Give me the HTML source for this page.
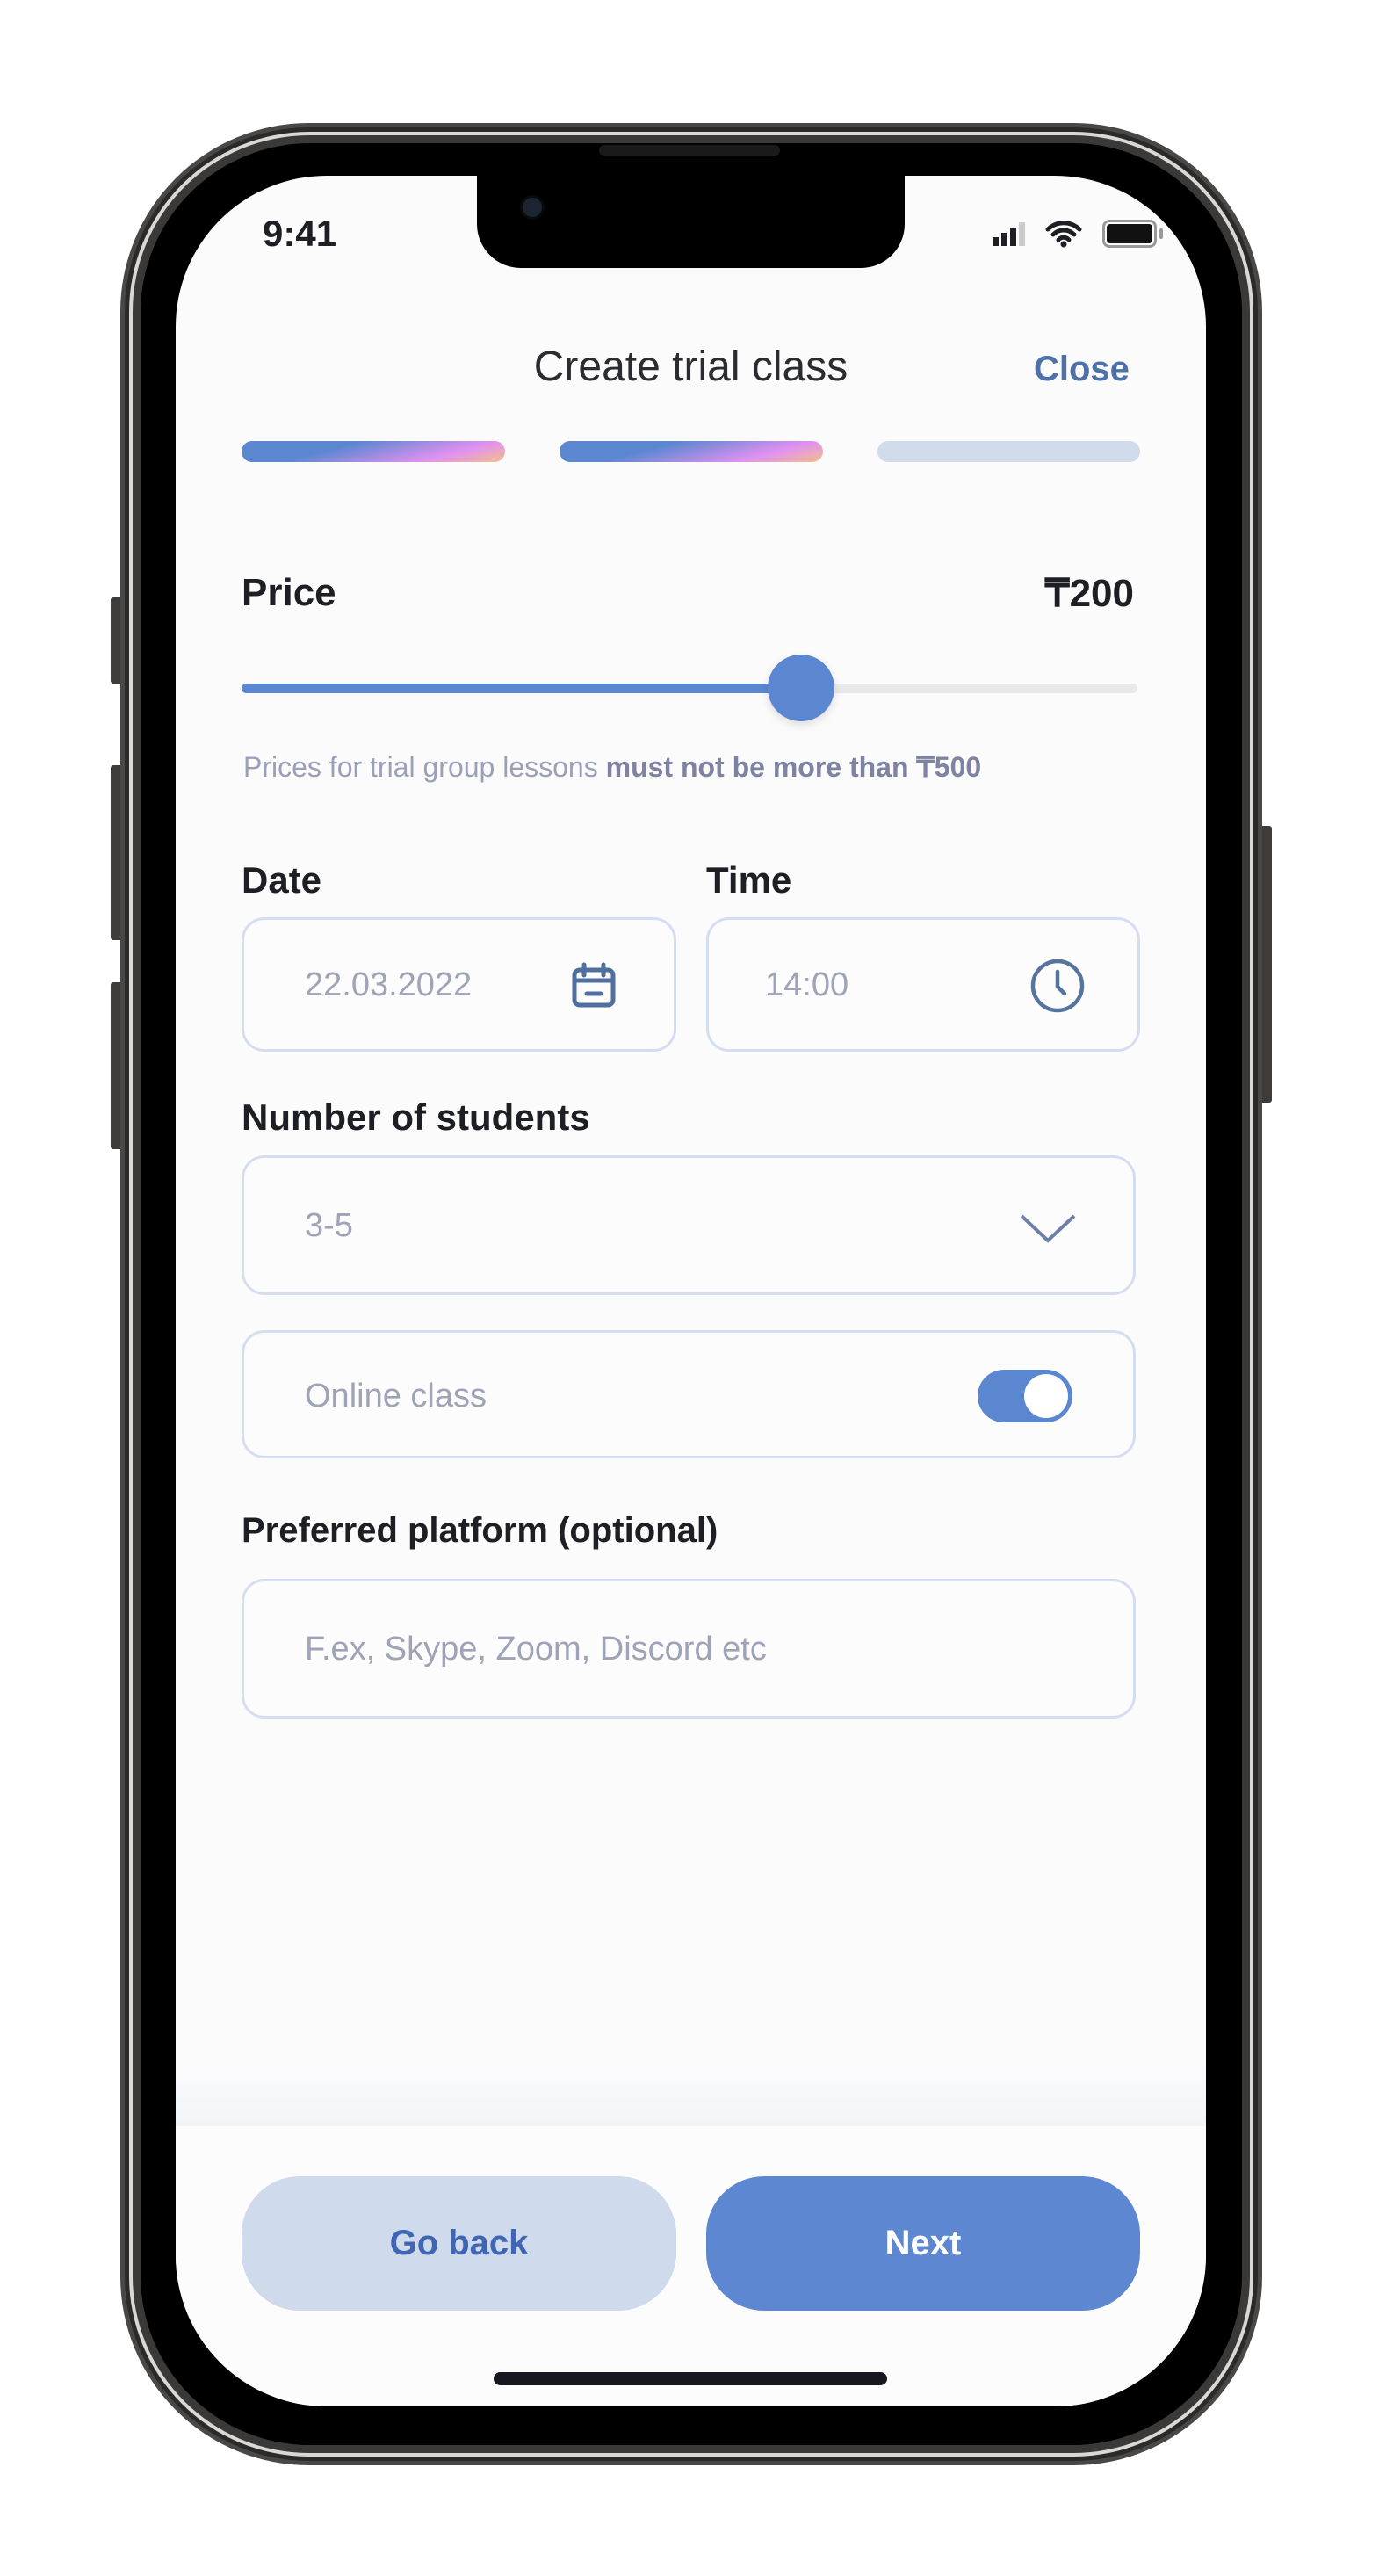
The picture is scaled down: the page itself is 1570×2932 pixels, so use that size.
<!DOCTYPE html>
<html><head><meta charset="utf-8"><style>
*{margin:0;padding:0;box-sizing:border-box}
html,body{width:1570px;height:2932px;background:#fff;overflow:hidden;font-family:"Liberation Sans",sans-serif}
.abs{position:absolute}
.rim{left:137px;top:140px;width:1300px;height:2666px;border-radius:215px;background:#4a4846;}
.rim2{left:142px;top:145px;width:1290px;height:2656px;border-radius:210px;background:#2b2a29;}
.rim3{left:147px;top:150px;width:1280px;height:2646px;border-radius:205px;background:#d8d8d8;}
.rim4{left:151px;top:154px;width:1272px;height:2638px;border-radius:201px;background:#3a3938;}
.bez{left:160px;top:163px;width:1254px;height:2620px;border-radius:193px;background:#000;}
.scr{left:200px;top:200px;width:1173px;height:2539px;border-radius:172px;background:#fbfbfc;overflow:hidden}
.btn{background:#3d3c3b;border-radius:3px}
.lbl{color:#1d1f24;font-weight:bold;font-size:42px}
.box{border:3px solid #d5def0;border-radius:26px;background:#fcfcfd}
.ph{color:#9ea3b6;font-size:38px}
</style></head><body>
<div class="abs btn" style="left:126px;top:680px;width:14px;height:98px"></div>
<div class="abs btn" style="left:126px;top:871px;width:14px;height:199px"></div>
<div class="abs btn" style="left:126px;top:1118px;width:14px;height:190px"></div>
<div class="abs btn" style="left:1434px;top:940px;width:14px;height:315px"></div>
<div class="abs rim"></div><div class="abs rim2"></div><div class="abs rim3"></div><div class="abs rim4"></div>
<div class="abs bez"></div>
<div class="abs" style="left:682px;top:165px;width:206px;height:12px;border-radius:6px;background:#1a1a1a"></div>
<div class="abs scr">
  <div class="abs" style="left:343px;top:-1px;width:487px;height:106px;background:#000;border-radius:0 0 50px 50px"></div>
  <div class="abs" style="left:392px;top:22px;width:28px;height:28px;border-radius:50%;background:#1b2430;border:3px solid #0a0a0a"></div>
  <div class="abs" style="left:99px;top:42px;font-size:42px;font-weight:bold;color:#1d1f24">9:41</div>
  <div class="abs" style="left:930px;top:70px;width:7px;height:10px;background:#1d1f24"></div>
  <div class="abs" style="left:940px;top:65px;width:7px;height:15px;background:#1d1f24"></div>
  <div class="abs" style="left:950px;top:59px;width:7px;height:21px;background:#1d1f24"></div>
  <div class="abs" style="left:960px;top:53px;width:7px;height:27px;background:#ccc"></div>
  <svg class="abs" style="left:990px;top:50px" width="42" height="32" viewBox="0 0 42 32"><path d="M3 11a26 26 0 0 1 36 0M9 17a17 17 0 0 1 24 0M15 23a8 8 0 0 1 12 0" stroke="#1d1f24" stroke-width="5" fill="none" stroke-linecap="round"/><circle cx="21" cy="28" r="3.5" fill="#1d1f24"/></svg>
  <div class="abs" style="left:1055px;top:50px;width:62px;height:32px;border:3px solid #999;border-radius:8px;padding:2px"><div style="width:100%;height:100%;background:#111;border-radius:4px"></div></div>
  <div class="abs" style="left:1120px;top:60px;width:4px;height:12px;background:#999;border-radius:2px"></div>

  <div class="abs" style="left:0;width:1173px;top:190px;text-align:center;font-size:48px;color:#2a2c30">Create trial class</div>
  <div class="abs" style="left:977px;top:198px;font-size:40px;font-weight:bold;color:#4d71a8">Close</div>

  <div class="abs" style="left:75px;top:302px;width:300px;height:24px;border-radius:12px;background:linear-gradient(165deg,#5b87d0 35%,#e191f0 75%,#f3c08a)"></div>
  <div class="abs" style="left:437px;top:302px;width:300px;height:24px;border-radius:12px;background:linear-gradient(165deg,#5b87d0 35%,#e191f0 75%,#f3c08a)"></div>
  <div class="abs" style="left:799px;top:302px;width:299px;height:24px;border-radius:12px;background:#d0dbeb"></div>

  <div class="abs lbl" style="left:75px;top:450px;font-size:44px">Price</div>
  <div class="abs lbl" style="right:82px;top:450px;font-size:44px">₸200</div>
  <div class="abs" style="left:75px;top:578px;width:1020px;height:11px;border-radius:6px;background:#e9e9ec"></div>
  <div class="abs" style="left:75px;top:578px;width:640px;height:11px;border-radius:6px;background:#5b87d0"></div>
  <div class="abs" style="left:674px;top:545px;width:76px;height:76px;border-radius:50%;background:#5b87d0;box-shadow:0 4px 10px rgba(0,0,0,.12)"></div>
  <div class="abs" style="left:77px;top:654px;font-size:32px;color:#9aa0b8;white-space:nowrap">Prices for trial group lessons <b style="color:#7d83a0">must not be more than ₸500</b></div>

  <div class="abs lbl" style="left:75px;top:778px">Date</div>
  <div class="abs lbl" style="left:604px;top:778px">Time</div>
  <div class="abs box" style="left:75px;top:844px;width:495px;height:153px"></div>
  <div class="abs box" style="left:604px;top:844px;width:494px;height:153px"></div>
  <div class="abs ph" style="left:147px;top:900px">22.03.2022</div>
  <div class="abs ph" style="left:671px;top:900px">14:00</div>
  <svg class="abs" style="left:448px;top:894px" width="56" height="56" viewBox="0 0 56 56"><rect x="6" y="10" width="44" height="40" rx="6" stroke="#4f6f9e" stroke-width="5" fill="none"/><path d="M6 22h44M17 4v12M39 4v12M20 37h16" stroke="#4f6f9e" stroke-width="5" stroke-linecap="round" fill="none"/></svg>
  <svg class="abs" style="left:970px;top:888px" width="68" height="68" viewBox="0 0 68 68"><circle cx="34" cy="34" r="28" stroke="#55759f" stroke-width="4.5" fill="none"/><path d="M34 18v17l8 8" stroke="#55759f" stroke-width="4.5" stroke-linecap="round" fill="none"/></svg>

  <div class="abs lbl" style="left:75px;top:1048px">Number of students</div>
  <div class="abs box" style="left:75px;top:1115px;width:1018px;height:159px"></div>
  <div class="abs ph" style="left:147px;top:1174px">3-5</div>
  <svg class="abs" style="left:960px;top:1180px" width="66" height="36" viewBox="0 0 66 36"><path d="M3 4l30 28 30-28" stroke="#6e80a6" stroke-width="4" fill="none"/></svg>

  <div class="abs box" style="left:75px;top:1314px;width:1018px;height:146px"></div>
  <div class="abs ph" style="left:147px;top:1368px">Online class</div>
  <div class="abs" style="left:913px;top:1359px;width:108px;height:60px;border-radius:30px;background:#5b87d0"></div>
  <div class="abs" style="left:966px;top:1364px;width:50px;height:50px;border-radius:50%;background:#fff"></div>

  <div class="abs lbl" style="left:75px;top:1520px;font-size:40px">Preferred platform (optional)</div>
  <div class="abs box" style="left:75px;top:1597px;width:1018px;height:159px"></div>
  <div class="abs ph" style="left:147px;top:1656px">F.ex, Skype, Zoom, Discord etc</div>

  <div class="abs" style="left:0;top:2150px;width:1173px;height:70px;background:linear-gradient(#fbfbfc,#f2f4f8)"></div>
  <div class="abs" style="left:0;top:2220px;width:1173px;height:330px;background:#fcfcfd"></div>
  <div class="abs" style="left:75px;top:2277px;width:495px;height:153px;border-radius:66px;background:#cfdaec;color:#3f66b3;font-size:40px;font-weight:bold;text-align:center;line-height:153px">Go back</div>
  <div class="abs" style="left:604px;top:2277px;width:494px;height:153px;border-radius:66px;background:#5d88d1;color:#fff;font-size:40px;font-weight:bold;text-align:center;line-height:153px">Next</div>
  <div class="abs" style="left:362px;top:2500px;width:448px;height:15px;border-radius:8px;background:#151821"></div>
</div>
</body></html>
